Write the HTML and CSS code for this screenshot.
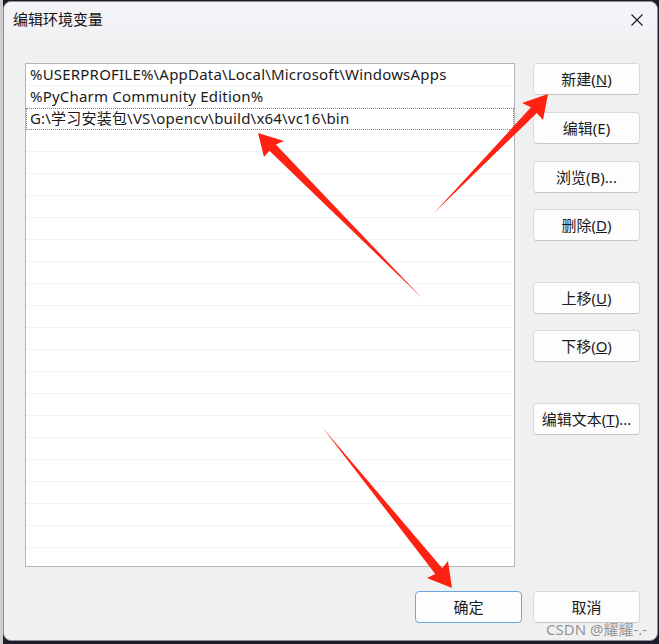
FILE: index.html
```html
<!DOCTYPE html>
<html lang="zh-CN">
<head>
<meta charset="utf-8">
<title>编辑环境变量</title>
<link rel="stylesheet" href="styles.css">
</head>
<body>
<div class="screen">
  <div class="dialog">
    <div class="titlebar">
      <span class="title">编辑环境变量</span>
      <span class="close">
        <svg width="12" height="12" viewBox="0 0 12 12"><path d="M0.5 0.5 L11.5 11.5 M11.5 0.5 L0.5 11.5" stroke="#1a1a1a" stroke-width="1.1" fill="none"/></svg>
      </span>
    </div>
    <div class="content">
      <div class="main">
        <div class="list">
          <div class="row">%USERPROFILE%\AppData\Local\Microsoft\WindowsApps</div>
          <div class="row">%PyCharm Community Edition%</div>
          <div class="row focus">G:\学习安装包\VS\opencv\build\x64\vc16\bin</div>
          <div class="row"></div><div class="row"></div><div class="row"></div><div class="row"></div>
          <div class="row"></div><div class="row"></div><div class="row"></div><div class="row"></div>
          <div class="row"></div><div class="row"></div><div class="row"></div><div class="row"></div>
          <div class="row"></div><div class="row"></div><div class="row"></div><div class="row"></div>
          <div class="row"></div><div class="row"></div><div class="row"></div><div class="row"></div>
        </div>
        <div class="side">
          <button class="btn">新建(<u>N</u>)</button>
          <button class="btn">编辑(E)</button>
          <button class="btn">浏览(B)...</button>
          <button class="btn tight">删除(<u>D</u>)</button>
          <button class="btn far">上移(<u>U</u>)</button>
          <button class="btn tight">下移(<u>O</u>)</button>
          <button class="btn far">编辑文本(<u>T</u>)...</button>
        </div>
      </div>
      <div class="footer">
        <button class="btn primary">确定</button>
        <button class="btn">取消</button>
      </div>
    </div>
  </div>
  <div class="watermark">CSDN @耀耀-.-</div>
  <svg class="arrows" width="659" height="644" viewBox="0 0 659 644">
    <polygon fill="#ff2111" points="434,213 531,107.3 522,103 548,94 543,120 536.8,112.9"/>
    <polygon fill="#ff2111" points="422,298 269.4,150.8 264,157 258,133 284,141 275.8,144.4"/>
    <polygon fill="#ff2111" points="322,427 435.3,573.9 427,578 452,588 448,561 442.3,568.3"/>
  </svg>
</div>
</body>
</html>
```

FILE: styles.css
```css
* { box-sizing: border-box; }
html, body { margin: 0; padding: 0; }
body {
  width: 659px;
  height: 644px;
  overflow: hidden;
  background: #1d1d2b;
  font-family: "Noto Sans", "Noto Sans CJK SC", sans-serif;
  font-size: 15px;
  color: #1a1a1a;
}
.screen {
  position: relative;
  width: 659px;
  height: 644px;
  padding: 1px 1px 3px 3px;
  background: linear-gradient(to right, #cdcdcd 0, #cdcdcd 3px, transparent 3px),
              linear-gradient(to bottom, #1d1d2b 0, #1d1d2b 100%);
}
.dialog {
  width: 655px;
  height: 640px;
  border: 1px solid #8d8d93;
  border-radius: 8px;
  background: #f0f0f0;
  overflow: hidden;
  display: flex;
  flex-direction: column;
}
.titlebar {
  height: 40px;
  flex: none;
  display: flex;
  justify-content: space-between;
  align-items: flex-start;
  padding: 7px 14px 0 9px;
  background: linear-gradient(to bottom, #f3f3f8 0, #f2f2f7 70%, #f0f0f0 100%);
}
.title {
  font-size: 15px;
  line-height: 20px;
  color: #111;
}
.close {
  display: block;
  width: 12px;
  height: 12px;
  margin-top: 5px;
}
.close svg { display: block; }
.content {
  flex: 1;
  display: flex;
  flex-direction: column;
  padding: 21px 17px 17px 21px;
}
.main {
  display: flex;
  gap: 18px;
  height: 504px;
}
.list {
  width: 490px;
  height: 504px;
  background: #fff;
  border: 1px solid #b4b4b9;
  overflow: hidden;
}
.row {
  height: 22px;
  line-height: 21px;
  padding-left: 4px;
  letter-spacing: 0.2px;
  border-bottom: 1px solid #f3f3f3;
  white-space: nowrap;
  overflow: hidden;
}
.row.focus {
  outline: 1px dotted #8a8a8a;
  outline-offset: -1px;
}
.side {
  width: 107px;
  display: flex;
  flex-direction: column;
}
.btn {
  display: block;
  width: 107px;
  height: 32px;
  padding: 0;
  font-family: inherit;
  font-size: 15px;
  color: #1a1a1a;
  background: #fdfdfd;
  border: 1px solid #dadada;
  border-bottom-color: #c6c6c6;
  border-radius: 4px;
  text-align: center;
  line-height: 28px;
}
.btn u { text-underline-offset: 1px; }
.side .btn + .btn { margin-top: 17px; }
.side .btn.tight { margin-top: 16px; }
.side .btn.far { margin-top: 41px; }
.footer {
  display: flex;
  justify-content: flex-end;
  gap: 11px;
  margin-top: 24px;
}
.btn.primary {
  border: 1px solid #6aa7e2;
}
.watermark {
  position: absolute;
  left: 546px;
  top: 620px;
  font-size: 15px;
  line-height: 18px;
  color: rgba(110, 110, 110, 0.75);
  text-shadow: 0 0 1px rgba(255,255,255,0.6);
  white-space: nowrap;
}
.arrows {
  position: absolute;
  left: 0;
  top: 0;
  pointer-events: none;
}
```
